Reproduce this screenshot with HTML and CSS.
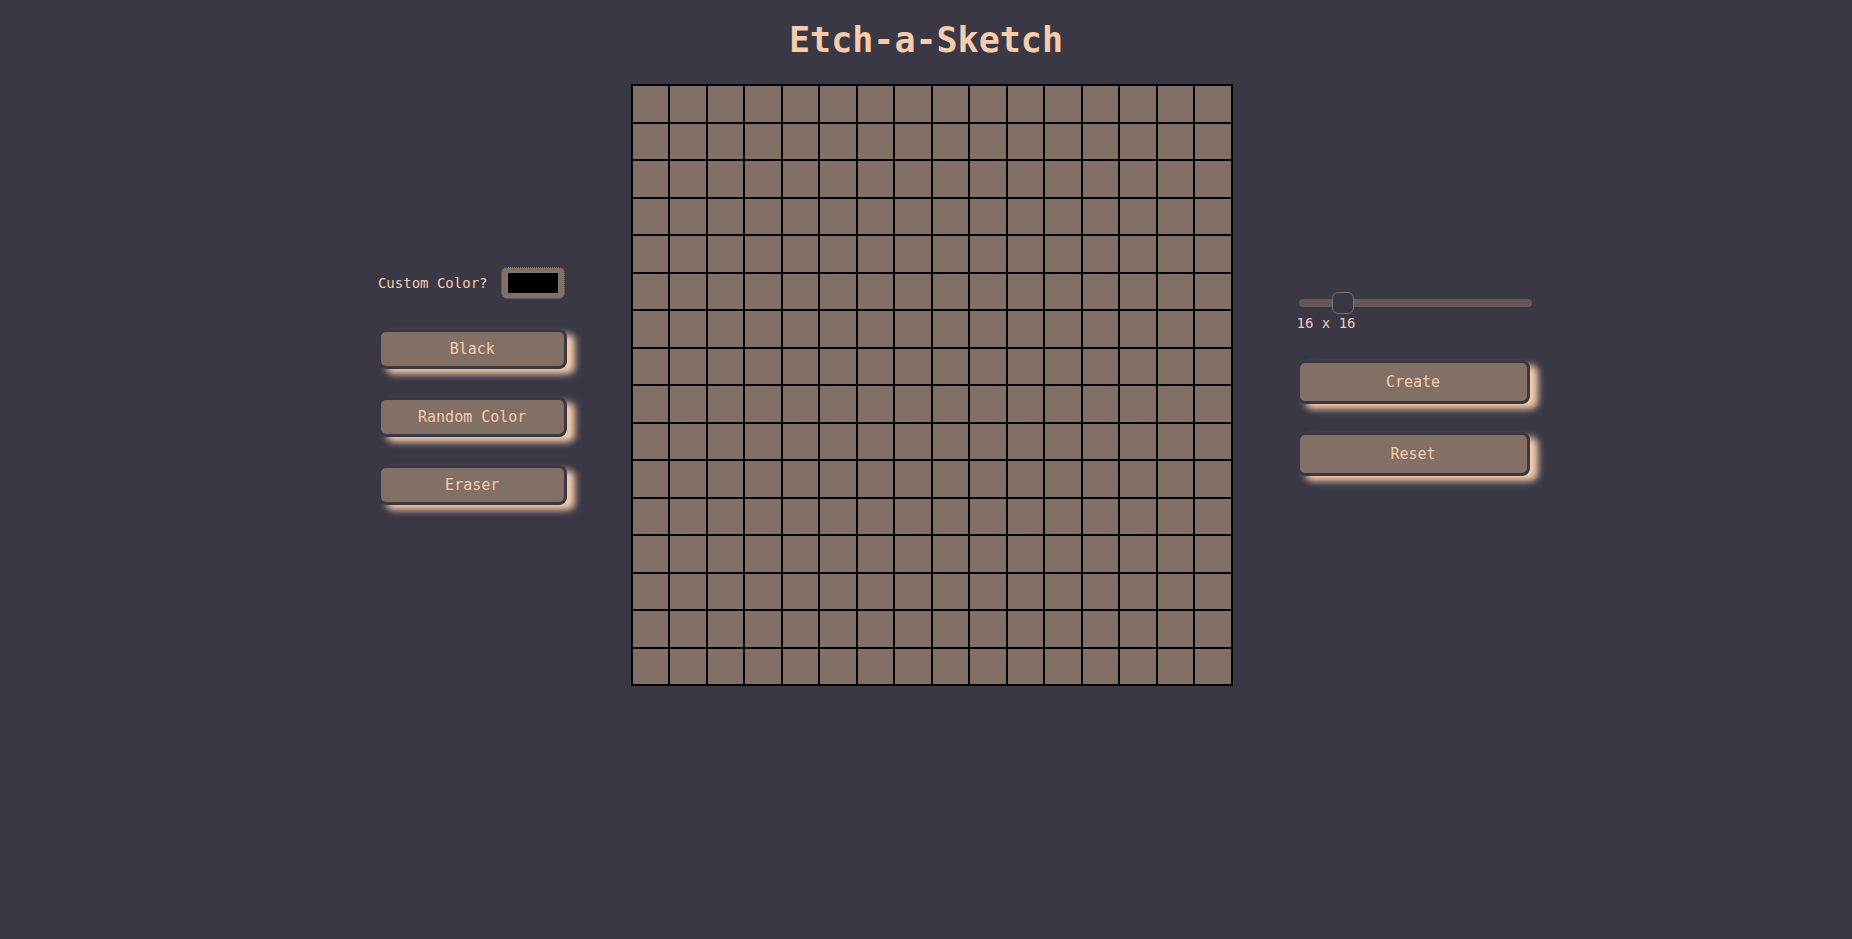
FILE: index.html
```html
<!DOCTYPE html>
<html lang="en">
<head>
<meta charset="utf-8">
<title>Etch-a-Sketch</title>
<link rel="stylesheet" href="styles.css">
</head>
<body>
<h1 class="title">Etch-a-Sketch</h1>
<main class="layout">
  <section class="panel panel-colors">
    <div class="picker">
      <label for="color">Custom Color?</label>
      <input class="color-input" type="color" id="color" value="#000000">
    </div>
    <button class="btn" type="button">Black</button>
    <button class="btn" type="button">Random Color</button>
    <button class="btn" type="button">Eraser</button>
  </section>
  <div class="board" id="board"></div>
  <section class="panel panel-size">
    <div class="size">
      <input class="slider" type="range" id="size" min="0" max="100" value="16">
      <label for="size">16 x 16</label>
    </div>
    <button class="btn btn-large" type="button">Create</button>
    <button class="btn btn-large" type="button">Reset</button>
  </section>
</main>
<script src="script.js"></script>
</body>
</html>
```
FILE: styles.css
```css
:root {
  --bg: #3a3845;
  --brown: #826f66;
  --peach: #f7ccac;
}

* {
  box-sizing: border-box;
}

body {
  margin: 0;
  background: var(--bg);
  color: var(--peach);
  font: 14px/18px "DejaVu Sans Mono", monospace;
}

.title {
  margin: 0;
  padding: 16px 0 20px;
  font-size: 35px;
  line-height: 48px;
  text-align: center;
}

.layout {
  display: grid;
  grid-template-columns: 1fr auto 1fr;
  gap: 64px;
  align-items: center;
  padding-left: 11px;
}

.board {
  display: grid;
  grid-template-columns: repeat(16, 1fr);
  grid-template-rows: repeat(16, 1fr);
  width: 602px;
  aspect-ratio: 1;
  border: 1px solid #000;
}

.cell {
  background: var(--brown);
  border: 1px solid #000;
}

.panel {
  display: flex;
  flex-direction: column;
  gap: 28px;
}

.panel-colors {
  justify-self: end;
  padding-top: 2px;
}

.panel-size {
  justify-self: start;
  padding-bottom: 2px;
}

.picker {
  display: flex;
  align-items: center;
  justify-content: space-between;
  gap: 13px;
  margin: 0 2px 2px 0;
}

.color-input {
  width: 64px;
  height: 32px;
  padding: 4px 5px;
  border: 1px dotted var(--bg);
  border-radius: 6px;
  background: var(--brown);
}

.color-input::-webkit-color-swatch-wrapper {
  padding: 0;
}

.color-input::-webkit-color-swatch {
  border: 1px solid #777;
  border-radius: 0;
}

.btn {
  height: 40px;
  padding: 0;
  border: 3px solid var(--bg);
  border-radius: 8px;
  background: var(--brown);
  box-shadow: 8px 5px 7px var(--peach);
  color: var(--peach);
  font: 15px/18px "DejaVu Sans Mono", monospace;
}

.btn-large {
  width: 233px;
  height: 44px;
}

.size {
  display: flex;
  flex-direction: column;
}

.slider {
  appearance: none;
  width: 233px;
  height: 22px;
  margin: 0 0 0 2px;
  background: none;
}

.slider::-webkit-slider-runnable-track {
  height: 8px;
  border-radius: 4px;
  background: #655955;
}

.slider::-webkit-slider-thumb {
  appearance: none;
  width: 22px;
  height: 22px;
  margin-top: -7px;
  border: 1px solid #77757c;
  border-radius: 6px;
  background: var(--bg);
}
```
FILE: script.js
```js
const board = document.getElementById("board");
for (let i = 0; i < 16 * 16; i++) {
  const cell = document.createElement("div");
  cell.className = "cell";
  board.appendChild(cell);
}
```
